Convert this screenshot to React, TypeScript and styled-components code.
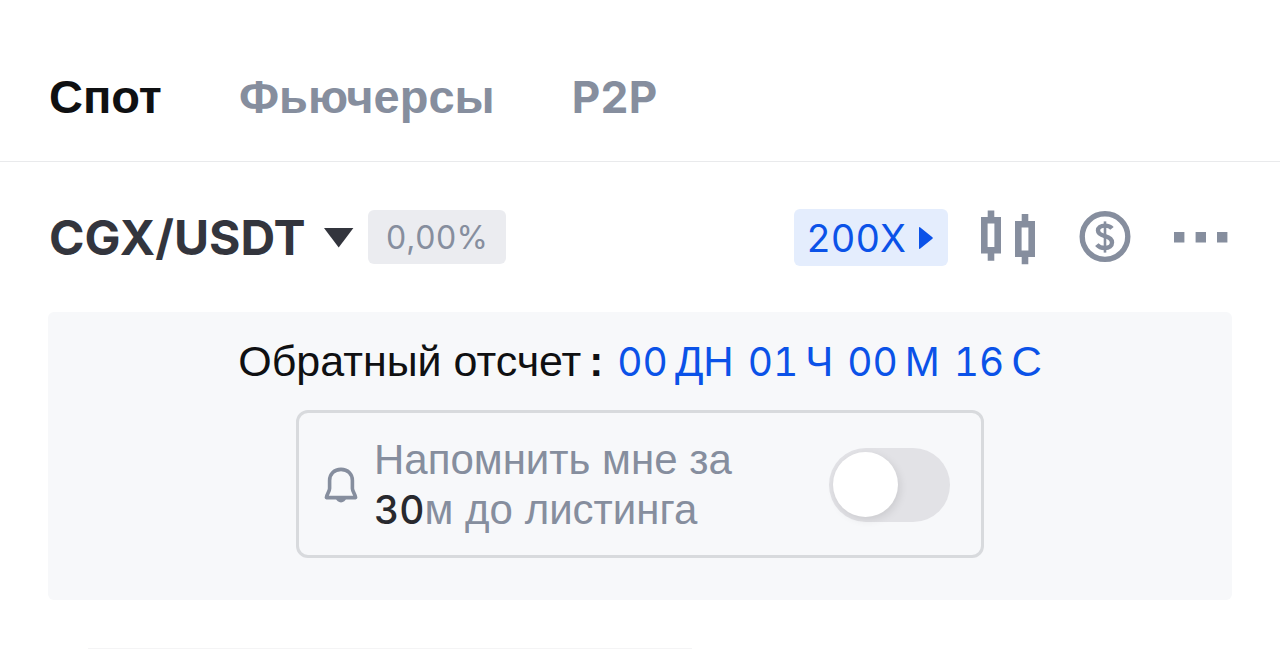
import React, { useState } from "react";
import styled, { createGlobalStyle } from "styled-components";

const GlobalStyle = createGlobalStyle`
  *, *::before, *::after { box-sizing: border-box; }
  body {
    margin: 0;
    background: #ffffff;
    color: #0f1012;
    font-family: "Liberation Sans", Arial, sans-serif;
    font-variant-numeric: tabular-nums;
  }
  button {
    border: 0;
    padding: 0;
    background: none;
    font-variant-numeric: inherit;
    cursor: pointer;
  }
`;

const latin = `Inter, "Liberation Sans", sans-serif`;

const Tabs = styled.nav`
  display: flex;
  align-items: baseline;
  gap: 77px;
  padding: 69px 49px 36px;
  border-bottom: 1px solid #e9eaec;
`;

const Tab = styled.a<{ $active?: boolean; $latin?: boolean }>`
  font-family: ${(p) => (p.$latin ? latin : "inherit")};
  font-size: ${(p) => (p.$latin ? 44 : 47)}px;
  line-height: 56px;
  font-weight: 700;
  text-decoration: none;
  color: ${(p) => (p.$active ? "#0f1012" : "#868e9e")};
`;

const Main = styled.main`
  padding: 0 48px;
`;

const PairBar = styled.header`
  display: flex;
  align-items: center;
  justify-content: space-between;
  height: 150px;
`;

const Group = styled.div<{ $gap: number }>`
  display: flex;
  align-items: center;
  gap: ${(p) => p.$gap}px;
`;

const PairButton = styled.button`
  display: flex;
  align-items: center;
  gap: 18px;
  padding: 2px 0 0 1px;
  font-family: ${latin};
  font-size: 48px;
  line-height: 56px;
  font-weight: 700;
  color: #33353d;
`;

const Change = styled.span`
  padding: 2px 18px 0;
  border-radius: 6px;
  background: #ebecf0;
  color: #868e9e;
  font-family: ${latin};
  font-size: 32px;
  line-height: 52px;
`;

const Leverage = styled.button`
  display: flex;
  align-items: center;
  gap: 12px;
  padding: 1px 14px 0 12px;
  border-radius: 6px;
  background: #e4edfd;
  color: #0b52e8;
  font-family: ${latin};
  font-size: 38px;
  line-height: 56px;
`;

const IconButton = styled.button`
  display: flex;
  color: #868e9e;
`;

const Notice = styled.section`
  display: flex;
  flex-direction: column;
  align-items: center;
  gap: 21px;
  padding: 22px 24px 42px;
  border-radius: 6px;
  background: #f7f8fa;
`;

const Countdown = styled.p`
  display: flex;
  align-items: baseline;
  gap: 14px;
  margin: 0;
  font-size: 43px;
  line-height: 54px;
  white-space: nowrap;
`;

const Timer = styled.span`
  display: flex;
  gap: 14px;
  color: #0b52e8;
  font-size: 42px;
`;

const Unit = styled.span`
  display: flex;
  align-items: baseline;
  gap: 7px;
`;

const Digits = styled.span`
  font-family: ${latin};
  font-size: 39px;
`;

const Colon = styled.b`
  margin-left: 8px;
  font-size: 42px;
`;

const Reminder = styled.label`
  display: flex;
  align-items: center;
  justify-content: space-between;
  width: 100%;
  max-width: 688px;
  padding: 21px 31px 20px 25px;
  border: 3px solid #d8dadd;
  border-radius: 12px;
  color: #868e9e;
  font-size: 42px;
  line-height: 50px;
`;

const ReminderText = styled.span`
  padding-top: 1px;
`;

const Minutes = styled.span`
  color: #28292e;
  font-family: ${latin};
  font-size: 39px;
  font-weight: 500;
`;

const Switch = styled.input`
  appearance: none;
  display: flex;
  align-items: center;
  width: 121px;
  height: 74px;
  margin: 0;
  padding: 4px;
  border-radius: 37px;
  background: #e2e2e6;
  cursor: pointer;

  &::before {
    content: "";
    width: 65px;
    height: 65px;
    border-radius: 50%;
    background: #ffffff;
    box-shadow: 2px 3px 8px rgba(0, 0, 0, 0.1);
  }
  &:checked {
    justify-content: flex-end;
    background: #0b52e8;
  }
`;

const NextCard = styled.section`
  width: 51%;
  height: 1px;
  margin: 48px 0 0 40px;
  background: #f4f4f5;
`;

const CaretDown = () => (
  <svg width="30" height="20" viewBox="0 0 30 20" fill="currentColor" aria-hidden="true">
    <path d="M0 0H29.4L14.7 19.6Z" />
  </svg>
);

const CaretRight = () => (
  <svg width="16" height="24" viewBox="0 0 16 24" fill="currentColor" aria-hidden="true">
    <path d="M2 1.2 14.4 11.2Q15.4 12 14.4 12.8L2 22.8Q1 23.5 1 22V2Q1 .5 2 1.2Z" />
  </svg>
);

const Candles = () => (
  <svg width="56" height="56" viewBox="0 0 56 56" fill="none" stroke="currentColor" strokeWidth="6.6" aria-hidden="true">
    <path d="M4.3 11.3H17.7V41.2H4.3ZM11 1.5V10M11 42V51.8" />
    <path d="M38.3 15.3H51.7V44.7H38.3ZM45 5V14M45 45V55.3" />
  </svg>
);

const Dollar = () => (
  <svg width="52" height="52" viewBox="0 0 52 52" fill="none" stroke="currentColor" aria-hidden="true">
    <circle cx="26" cy="25.6" r="22.8" strokeWidth="5.4" />
    <path
      d="M33 17.4C31.5 15.6 29 14.6 26 14.6C21.6 14.6 19 16.6 19 19.6C19 22.8 21.6 24 26 25.2C30.6 26.5 33 28.2 33 31.5C33 35 30.2 37 25.8 37C22.3 37 19.6 35.8 17.8 33.6"
      strokeWidth="4.4"
    />
    <path d="M26 10.4V41.6" strokeWidth="2.6" />
  </svg>
);

const Dots = () => (
  <svg width="58" height="52" viewBox="0 0 58 52" fill="currentColor" aria-hidden="true">
    <path d="M0 21H10.4V31.4H0ZM21.6 21H32V31.4H21.6ZM43 21H53.4V31.4H43Z" />
  </svg>
);

const Bell = () => (
  <svg width="34" height="36" viewBox="0 0 34 36" fill="none" stroke="currentColor" strokeWidth="3.6" strokeLinejoin="round" aria-hidden="true">
    <path d="M5.6 13.5C5.6 6.8 10.2 2.4 17 2.4S28.4 6.8 28.4 13.5V21.5C28.4 24.6 31.6 28 31.6 30.6H2.4C2.4 28 5.6 24.6 5.6 21.5Z" />
    <path d="M11.6 31H22.4Q20.8 35.4 17 35.4T11.6 31Z" fill="currentColor" stroke="none" />
  </svg>
);

const time = [
  { id: "days", value: "00", unit: "ДН" },
  { id: "hours", value: "01", unit: "Ч" },
  { id: "minutes", value: "00", unit: "М" },
  { id: "seconds", value: "16", unit: "С" },
];

export default function App() {
  const [remind, setRemind] = useState(false);
  return (
    <>
      <GlobalStyle />
      <Tabs>
        <Tab href="#spot" $active aria-current="page">Спот</Tab>
        <Tab href="#futures">Фьючерсы</Tab>
        <Tab href="#p2p" $latin>P2P</Tab>
      </Tabs>
      <Main>
        <PairBar>
          <Group $gap={14}>
            <PairButton>
              CGX/USDT
              <CaretDown />
            </PairButton>
            <Change>0,00%</Change>
          </Group>
          <Group $gap={32}>
            <Leverage>
              200X
              <CaretRight />
            </Leverage>
            <Group $gap={43}>
              <IconButton aria-label="График"><Candles /></IconButton>
              <IconButton aria-label="Валюта"><Dollar /></IconButton>
              <IconButton aria-label="Ещё"><Dots /></IconButton>
            </Group>
          </Group>
        </PairBar>
        <Notice>
          <Countdown>
            <span>
              Обратный отсчет<Colon>:</Colon>
            </span>
            <Timer>
              {time.map(({ id, value, unit }) => (
                <Unit key={id}>
                  <Digits>{value}</Digits>
                  {unit}
                </Unit>
              ))}
            </Timer>
          </Countdown>
          <Reminder>
            <Group $gap={16}>
              <Bell />
              <ReminderText>
                Напомнить мне за
                <br />
                <Minutes>30</Minutes>м до листинга
              </ReminderText>
            </Group>
            <Switch
              type="checkbox"
              role="switch"
              checked={remind}
              onChange={(e) => setRemind(e.target.checked)}
            />
          </Reminder>
        </Notice>
        <NextCard />
      </Main>
    </>
  );
}
